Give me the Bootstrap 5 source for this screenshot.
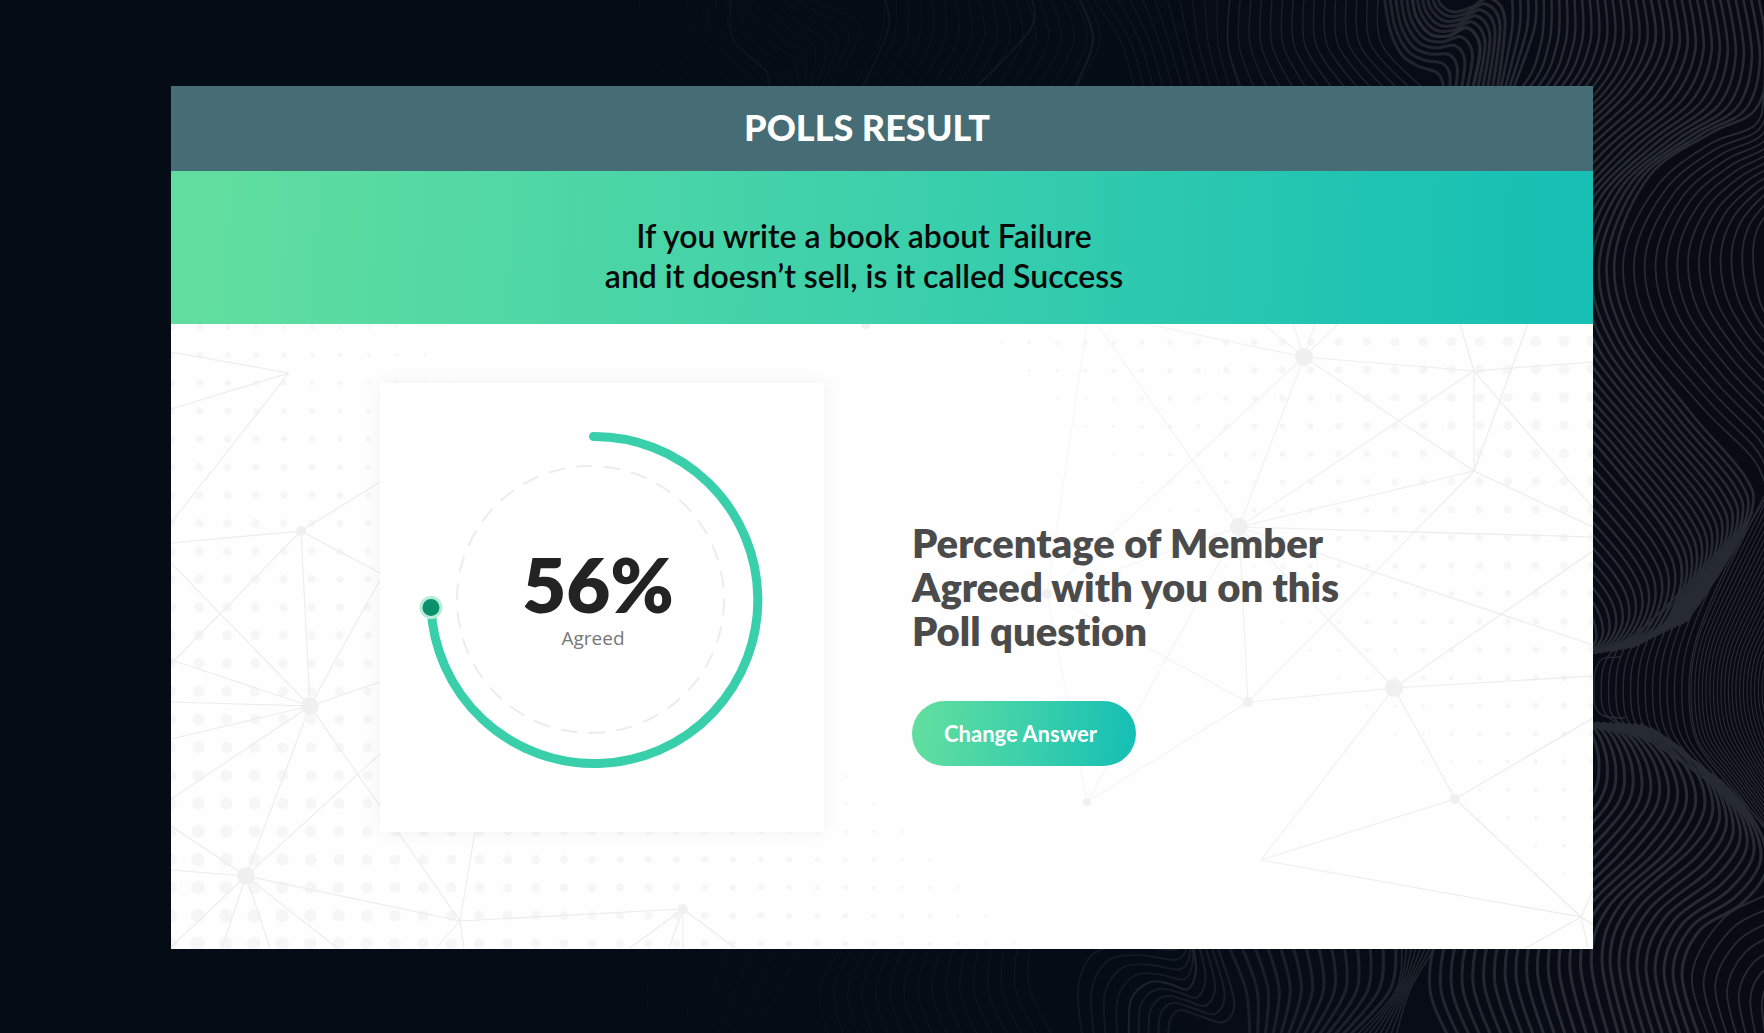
<!DOCTYPE html>
<html lang="en">
<head>
<meta charset="utf-8">
<meta name="viewport" content="width=device-width, initial-scale=1">
<title>Polls Result</title>
<link href="https://cdn.jsdelivr.net/npm/bootstrap@5.3.0/dist/css/bootstrap.min.css" rel="stylesheet">
<style>
  body { background: linear-gradient(90deg, #040c15 0%, #060c16 60%, #080b14 100%); font-family: Lato, "Liberation Sans", sans-serif; font-variant-ligatures: none; min-height: 100vh; padding: 86px 16px 84px; overflow-x: hidden; }
  .waves { position: fixed; inset: 0; width: 100%; height: 100%; z-index: -1; }
  .poll { max-width: 1422px; background: #fefefe; }
  .poll-head { background: #466d75; color: #fff; padding: 19px 30px 22px 0; }
  .poll-head h1 { font-size: 36px; line-height: 44px; font-weight: 900; }
  .poll-question { background: linear-gradient(93deg, #61de9f 2%, #3dd0ab 50%, #1fc3b2 85%, #17c0b4 100%); color: #080808; padding: 45px 36px 28px 0; }
  .poll-question p { font-size: 32px; line-height: 40px; font-weight: 600; }
  .poll-body { padding: 59px 40px 117px 209px; gap: 88px; }
  .network { position: absolute; inset: 0; width: 100%; height: 100%; }
  .score { width: 444px; max-width: 100%; background: #fff; box-shadow: 0 0 20px rgba(0,0,0,.05); }
  .score-ring { display: block; width: 100%; }
  .score-text { position: absolute; inset: 0; padding: 0 12px 20px 0; }
  .score-value { font-size: 76px; line-height: 80px; font-weight: 800; color: #232323; padding-left: 4px; }
  .score-label { font-family: "Open Sans", "Noto Sans", sans-serif; font-size: 19px; line-height: 28px; color: #777; padding-right: 6px; }
  .verdict { padding-top: 72px; }
  .verdict h2 { font-size: 40px; line-height: 44px; font-weight: 800; color: #4b4b4b; max-width: 460px; margin-bottom: 48px; }
  .btn-change { --bs-btn-color: #fff; --bs-btn-hover-color: #fff; --bs-btn-active-color: #fff; --bs-btn-border-width: 0; --bs-btn-padding-x: 32px; --bs-btn-padding-y: 16px; --bs-btn-font-size: 22px; --bs-btn-line-height: 33px; --bs-btn-font-weight: 700; width: 224px; text-align: left; white-space: nowrap; background: linear-gradient(95deg, #61de9f 4%, #3dd0ab 50%, #17c0b4 96%); }
</style>
</head>
<body>
<svg class="waves" viewBox="0 0 1764 1033" preserveAspectRatio="xMaxYMid slice" aria-hidden="true">
  <defs>
    <linearGradient id="fade" gradientUnits="userSpaceOnUse" x1="600" y1="0" x2="1560" y2="0">
      <stop offset="0" stop-color="#262a33" stop-opacity=".12"/>
      <stop offset=".5" stop-color="#262a33" stop-opacity=".4"/>
      <stop offset="1" stop-color="#262a33"/>
    </linearGradient>
  </defs>
  <g id="waves" fill="none" stroke="url(#fade)"></g>
</svg>

<main class="poll mx-auto">
  <header class="poll-head text-center"><h1 class="mb-0">POLLS RESULT</h1></header>
  <section class="poll-question text-center">
    <p class="mb-0">If you write a book about Failure<br>and it doesn’t sell, is it called Success</p>
  </section>
  <section class="poll-body position-relative d-flex flex-wrap flex-lg-nowrap align-items-center">
    <svg class="network" viewBox="171 324 1422 625" preserveAspectRatio="xMidYMid slice" aria-hidden="true">
      <defs>
        <linearGradient id="thin" gradientUnits="userSpaceOnUse" x1="1000" y1="0" x2="1500" y2="0">
          <stop offset="0" stop-color="#f7f7f7"/>
          <stop offset="1" stop-color="#ebebeb"/>
        </linearGradient>
      </defs>
      <g id="dots" fill="#f6f6f6"></g>
      <g id="links" fill="none" stroke-width="1.1"></g>
      <g id="nodes" fill="#f0f0f0"></g>
    </svg>
    <div class="score position-relative flex-shrink-0">
      <svg class="score-ring" viewBox="380 383 444 449" role="img" aria-label="56% agreed">
        <circle cx="590.5" cy="599.5" r="133.5" fill="none" stroke="#ececec" stroke-width="2" stroke-linecap="round" stroke-dasharray="15 12.96" transform="rotate(-96 590.5 599.5)"/>
        <path d="M593.5 436.5A163.5 163.5 0 1 1 431 607" fill="none" stroke="#3acfab" stroke-width="9" stroke-linecap="round"/>
        <circle cx="431" cy="607.5" r="11.5" fill="#b7edd8"/>
        <circle cx="431" cy="607.5" r="8.5" fill="#0a906c"/>
      </svg>
      <div class="score-text d-flex flex-column align-items-center justify-content-center">
        <div class="score-value">56%</div>
        <div class="score-label">Agreed</div>
      </div>
    </div>
    <div class="verdict position-relative">
      <h2>Percentage of Member Agreed with you on this Poll question</h2>
      <button type="button" class="btn btn-change rounded-pill">Change Answer</button>
    </div>
  </section>
</main>

<script src="https://cdn.jsdelivr.net/npm/bootstrap@5.3.0/dist/js/bootstrap.bundle.min.js"></script>
<script>
  const put = (id, html) => { document.getElementById(id).innerHTML = html; };

  // Halftone dots that shrink away from two corners
  let dots = '';
  for (let r = 0; r < 23; r++) {
    for (let c = 0; c <= 8 + r; c++)
      dots += `<circle cx="${171.8 + c * 28.15 - r * .1}" cy="${327 + r * 28.03}" r="${1.6 + (8 + r - c) * .195}"/>`;
    for (let c = r; c < 22; c++)
      dots += `<circle cx="${1001 + c * 28.15}" cy="${343 + r * 28.03 - c * .09}" r="${1.6 + (c - r) * .2}"/>`;
  }
  put('dots', dots);

  // Network: each hub, its radius, and the points it is joined to
  const hubs = [
    [289,373,0, [171,352, 171,409, 171,523]],
    [301,531,5, [171,543, 380,482, 380,573, 310,706, 171,664]],
    [310,706,9, [171,563, 380,580, 171,660, 171,702, 171,739, 171,799, 246,876, 380,682, 460,921]],
    [246,876,9, [380,754, 171,826, 171,870, 171,947, 222,948, 270,948, 337,948, 460,921]],
    [460,921,0, [475,832, 436,948, 464,948, 683,909]],
    [683,909,5, [630,948, 669,948, 683,949, 735,948]],
    [866,324,5, []],
    [1304,357,9, [1146,324, 1263,324, 1293,324, 1315,324, 1338,324, 1474,371, 1474,471, 1047,594, 1239,527]],
    [1474,371,0, [1460,324, 1474,471, 1593,362, 1239,527, 1593,508]],
    [1474,471,0, [1528,324, 1239,527, 1593,527, 1248,702]],
    [1239,527,9, [1097,324, 1593,537, 1047,594, 1593,645, 1248,702, 1087,802, 1394,688]],
    [1047,594,5, [1087,324, 1087,802, 1248,702]],
    [1248,702,5, [1087,802, 1394,688]],
    [1087,802,4, []],
    [1394,688,9, [1593,551, 1593,676, 1455,799, 1261,860]],
    [1455,799,5, [1593,718, 1261,860, 1581,917]],
    [1581,917,0, [1261,860, 1526,948, 1588,948, 1593,890, 1593,925]]
  ];
  let links = '', nodes = '';
  for (const [x, y, r, to] of hubs) {
    for (let i = 0; i < to.length; i += 2)
      links += `<line x1="${x}" y1="${y}" x2="${to[i]}" y2="${to[i + 1]}" stroke="${x > 1000 ? 'url(#thin)' : '#ececec'}"/>`;
    if (r) nodes += `<circle cx="${x}" cy="${y}" r="${r}"/>`;
  }
  put('links', links);
  put('nodes', nodes);

  // Flow lines: n curves blended between two guide curves of equal length
  const smooth = p => {
    let d = `M${p[0]} ${p[1]}`;
    const n = p.length / 2, at = i => { i = Math.max(0, Math.min(n - 1, i)); return [p[2 * i], p[2 * i + 1]]; };
    for (let i = 0; i < n - 1; i++) {
      const [a, b, c, e] = [at(i - 1), at(i), at(i + 1), at(i + 2)];
      d += `C${[b[0] + (c[0] - a[0]) / 6, b[1] + (c[1] - a[1]) / 6, c[0] - (e[0] - b[0]) / 6, c[1] - (e[1] - b[1]) / 6, c[0], c[1]].map(v => v.toFixed(1)).join(' ')}`;
    }
    return d;
  };
  const foldMid = [1412,-5, 1416,16, 1430,34, 1448,36, 1468,28, 1480,48, 1472,92];
  const dipMid = [1129,1040, 1131,1000, 1150,982, 1170,984, 1188,989, 1196,970, 1192,940];
  const sweepMid = [1650,-5, 1655,43, 1628,92, 1560,160, 1510,240, 1505,310, 1540,380, 1605,455, 1665,530, 1682,575, 1664,625, 1630,648];
  const bands = [
    // faint lines at the top
    [12, .8, [620,-5, 625,40, 650,90], [725,-5, 735,40, 790,90]],
    [9, .8, [728,-5, 740,45, 770,68, 790,90], [790,-5, 830,8, 860,30, 830,90]],
    [18, .8, [885,-5, 880,40, 850,90], [1085,-5, 1100,40, 1075,90]],
    [12, 1, [1090,-5, 1120,40, 1135,90], [1230,-5, 1228,45, 1240,90]],
    [15, 1.4, [1230,-5, 1228,45, 1242,90], [1378,-5, 1382,45, 1425,90]],
    [1, 2, [731,-5, 733,40, 765,70, 770,92], [731,-5, 733,40, 765,70, 770,92]],
    [1, 2, [884,-5, 888,30, 860,92], [884,-5, 888,30, 860,92]],
    [1, 2, [1032,-5, 1030,30, 975,88], [1032,-5, 1030,30, 975,88]],
    [1, 2.6, [1078,-5, 1093,40, 1074,90], [1078,-5, 1093,40, 1074,90]],
    // fold
    [6, 3, [1384,-5, 1390,30, 1402,55, 1418,66, 1436,72, 1442,80, 1444,92], foldMid],
    [6, 3, foldMid, [1436,-5, 1442,6, 1454,12, 1470,8, 1490,-2, 1505,20, 1497,92]],
    [4, 2.6, [1512,-5, 1512,30, 1500,92], [1536,-5, 1534,30, 1512,92]],
    // large sweep down the right side
    [15, 2.4, [1544,-5, 1541,43, 1518,92, 1430,170, 1370,280, 1380,380, 1440,480, 1530,560, 1578,610, 1590,640, 1580,655, 1560,659], sweepMid],
    [15, 2.6, sweepMid,
              [1758,-5, 1768,60, 1755,110, 1711,133, 1650,175, 1615,255, 1630,330, 1690,412, 1744,475, 1752,510, 1724,565, 1686,622]],
    [13, 1.8, [1764,20, 1764,90, 1755,125, 1710,144, 1658,185, 1624,255, 1638,327, 1700,405, 1750,455, 1764,480, 1770,500],
              [1810,170, 1805,175, 1790,190, 1770,210, 1757,230, 1753,255, 1757,290, 1766,315, 1790,345, 1800,360, 1810,370]],
    // pinch
    [14, 1.4, [1620,657, 1602,659, 1595,672, 1594,690, 1595,706, 1604,716, 1625,718], [1764,500, 1725,570, 1696,640, 1689,690, 1696,740, 1725,780, 1764,826]],
    [20, 1.2, [1764,496, 1727,572, 1698,640, 1691,690, 1698,740, 1727,778, 1764,828], [1800,590, 1780,630, 1766,660, 1762,690, 1766,720, 1780,760, 1800,790]],
    // lower sweep
    [17, 3, [1540,720, 1560,722, 1566,760, 1550,800, 1490,860, 1440,930, 1430,990, 1450,1040],
            [1640,724, 1672,745, 1698,775, 1704,810, 1680,850, 1620,905, 1602,960, 1620,1040]],
    [9, 3, [1650,728, 1684,752, 1706,780, 1712,815, 1690,850, 1630,905, 1610,960, 1628,1040],
            [1720,780, 1748,812, 1764,842, 1766,872, 1740,905, 1700,930, 1682,975, 1700,1040]],
    [7, 1.8, [1800,880, 1766,895, 1722,920, 1692,975, 1710,1040], [1810,960, 1790,970, 1768,985, 1762,1005, 1766,1040]],
    // bottom strip
    [8, .8, [640,940, 625,990, 640,1040], [800,940, 780,990, 745,1040]],
    [16, .9, [845,940, 820,990, 830,1040], [1030,940, 1030,990, 1055,1040]],
    [5, 1.8, [1083,1040, 1078,990, 1092,955, 1125,945, 1170,950, 1182,945, 1188,930], dipMid],
    [5, 2, dipMid, [1168,1040, 1170,1020, 1180,1010, 1200,1016, 1224,1022, 1234,1000, 1215,940]],
    [14, 3, [1226,940, 1246,990, 1250,1040], [1396,940, 1390,990, 1345,1040]],
    [8, 1.6, [1402,940, 1396,990, 1352,1040], [1440,940, 1410,990, 1395,1040]]
  ];
  put('waves', bands.map(([n, w, a, b]) =>
    Array.from({ length: n }, (_, i) => {
      const t = n > 1 ? i / (n - 1) : 0;
      return `<path stroke-width="${w}" d="${smooth(a.map((v, k) => v + (b[k] - v) * t))}"/>`;
    }).join('')).join(''));
</script>
</body>
</html>
